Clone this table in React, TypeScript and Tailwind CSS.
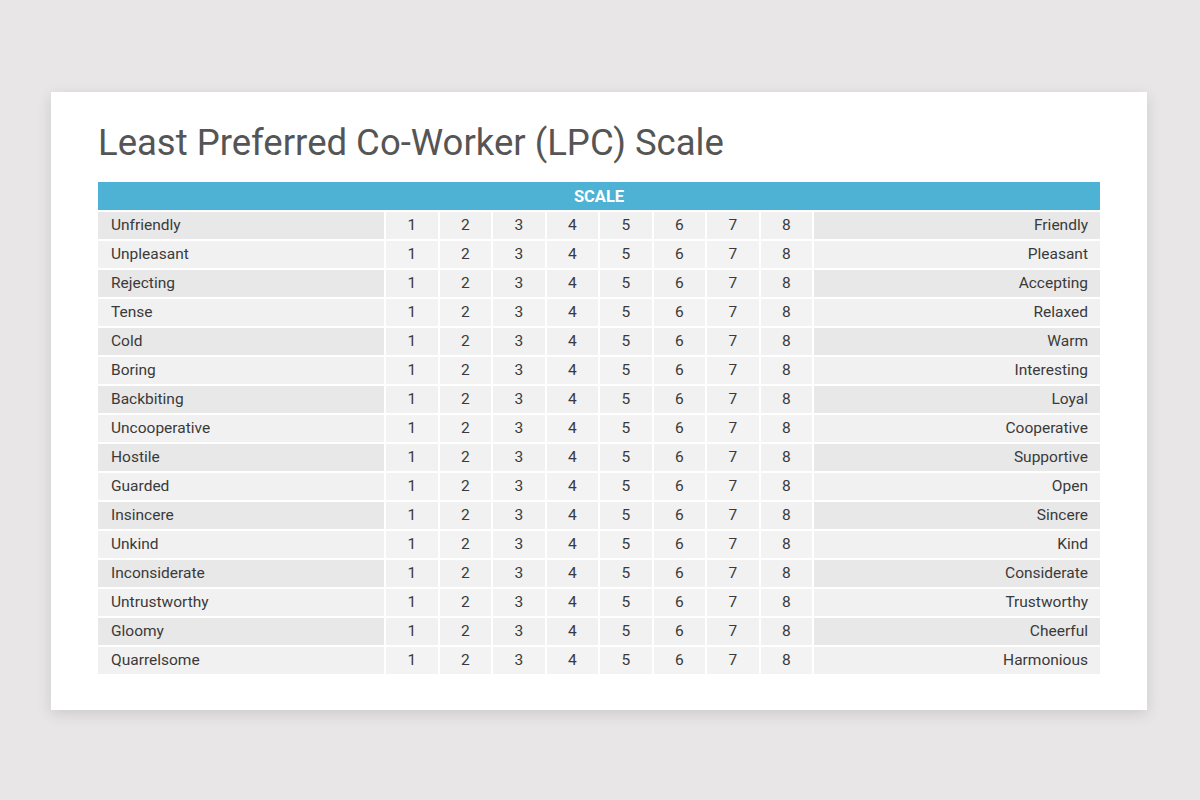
const rows: [string, string][] = [
  ["Unfriendly", "Friendly"],
  ["Unpleasant", "Pleasant"],
  ["Rejecting", "Accepting"],
  ["Tense", "Relaxed"],
  ["Cold", "Warm"],
  ["Boring", "Interesting"],
  ["Backbiting", "Loyal"],
  ["Uncooperative", "Cooperative"],
  ["Hostile", "Supportive"],
  ["Guarded", "Open"],
  ["Insincere", "Sincere"],
  ["Unkind", "Kind"],
  ["Inconsiderate", "Considerate"],
  ["Untrustworthy", "Trustworthy"],
  ["Gloomy", "Cheerful"],
  ["Quarrelsome", "Harmonious"],
];

const nums = [1, 2, 3, 4, 5, 6, 7, 8];

export default function App() {
  return (
    <div
      className="w-[1200px] h-[800px] bg-[#e8e6e7] pt-[92px] pl-[51px]"
      style={{ fontFamily: "Roboto, 'Liberation Sans', sans-serif" }}
    >
      <div className="w-[1096px] h-[618px] bg-white pt-[32px] pl-[47px] shadow-[0_4px_14px_rgba(0,0,0,0.12)]">
        <h1 className="text-[36.5px] leading-[37px] text-[#555555] font-normal">
          Least Preferred Co-Worker (LPC) Scale
        </h1>

        <div className="mt-[21px] w-[1002px] grid grid-cols-[286px_repeat(8,1fr)_286px] grid-rows-[28px] gap-[2px] auto-rows-[27px]">
          <div className="col-span-10 bg-[#4db2d3] flex items-center justify-center pt-[2px] text-white text-[16.5px] font-bold">
            SCALE
          </div>
          {rows.map(([left, right], i) => {
            const odd = i % 2 === 0;
            const labelBg = odd ? "bg-[#e8e8e8]" : "bg-[#f1f1f1]";
            const numBg = odd ? "bg-[#f1f1f1]" : "bg-[#f3f3f3]";
            return [
              <div
                key={`l${i}`}
                className={`${labelBg} flex items-center pl-[13px] pt-[1px] text-[15.5px] text-[#3a3a3a]`}
              >
                {left}
              </div>,
              ...nums.map((n) => (
                <div
                  key={`n${i}-${n}`}
                  className={`${numBg} flex items-center justify-center pt-[1px] text-[15.5px] text-[#3a3a3a]`}
                >
                  {n}
                </div>
              )),
              <div
                key={`r${i}`}
                className={`${labelBg} flex items-center justify-end pr-[12px] pt-[1px] text-[15.5px] text-[#3a3a3a]`}
              >
                {right}
              </div>,
            ];
          })}
        </div>
      </div>
    </div>
  );
}
